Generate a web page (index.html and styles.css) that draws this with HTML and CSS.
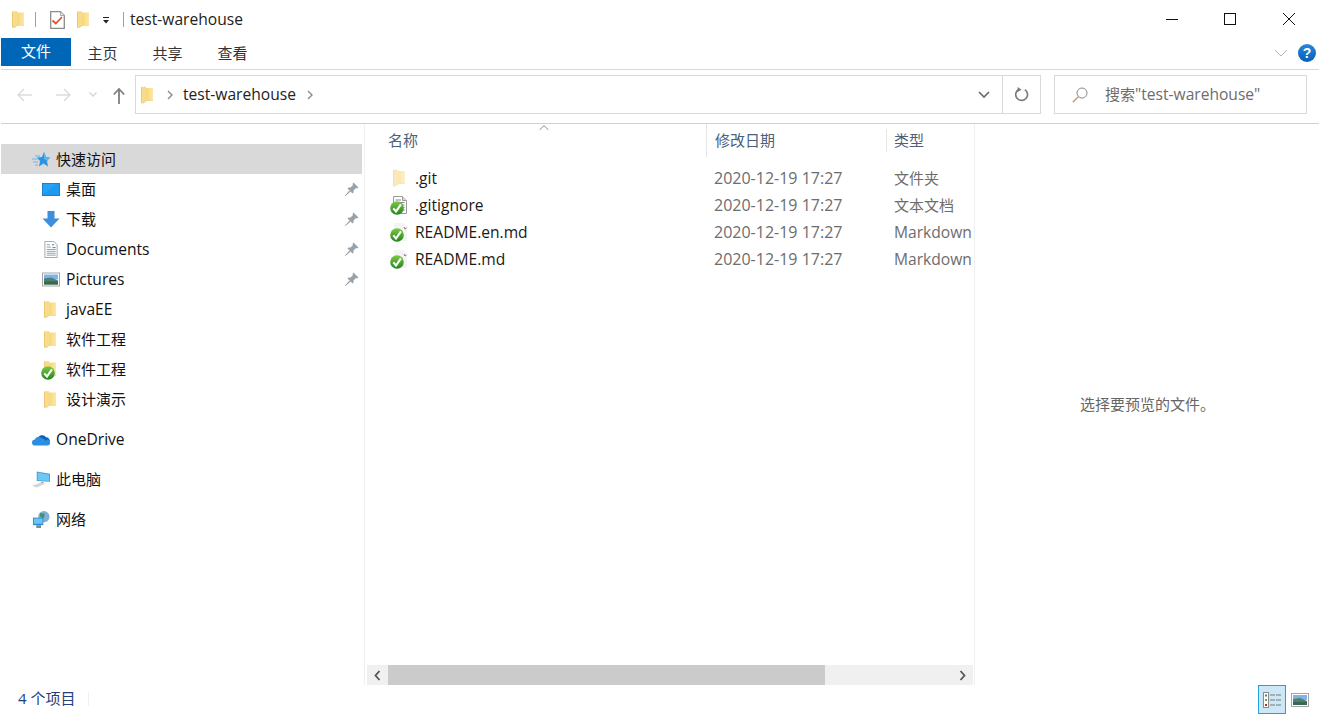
FILE: index.html
```html
<!DOCTYPE html>
<html lang="zh-CN">
<head>
  <meta charset="UTF-8">
  <title>test-warehouse</title>
  <link rel="stylesheet" href="styles.css">
</head>
<body>
  <svg class="defs" width="0" height="0">
    <defs>
      <linearGradient id="folder-right" x1="0" y1="0" x2="1" y2="0">
        <stop offset="0" stop-color="#f7d675"/>
        <stop offset="1" stop-color="#fce7a8"/>
      </linearGradient>
      <linearGradient id="check-fill" x1="0" y1="0" x2="0" y2="1">
        <stop offset="0" stop-color="#7ccb45"/>
        <stop offset="1" stop-color="#23831a"/>
      </linearGradient>
    </defs>
    <symbol id="folder" viewBox="0 0 12 17">
      <path d="M0 0.5 L5 0 L5 14 L1 17 L0 16.5 Z" fill="#f8dc8e"/>
      <path d="M0 0.5 L1 0.5 L1 16.5 L0 16.5 Z" fill="#efc96f"/>
      <path d="M5 1.5 L12 1.5 L12 14 L5 14 Z" fill="url(#folder-right)"/>
      <path d="M1 17 L5 14 L12 14 L12 14.6 L5.5 14.6 L2 17 Z" fill="#e8bd5e"/>
    </symbol>
    <symbol id="pin" viewBox="0 0 14 14">
      <path d="M8.5 0.5 L13.5 5.5 L12 6.5 L11 6 L8.5 8.5 L8.5 10.5 L7.5 11.5 L2.5 6.5 L3.5 5.5 L5.5 5.5 L8 3 L7.5 2 Z" fill="#98a2ab"/>
      <path d="M4.5 9 L0.5 13.5 L5 9.5 Z" fill="#98a2ab" stroke="#98a2ab"/>
    </symbol>
    <symbol id="check" viewBox="0 0 16 16">
      <circle cx="8" cy="8" r="7.8" fill="url(#check-fill)"/>
      <path d="M3.8 8.5 L6.8 12 L12.5 3.8" fill="none" stroke="#fff" stroke-width="2.4"/>
    </symbol>
    <symbol id="landscape" viewBox="0 0 18 14">
      <rect x="0.5" y="0.5" width="17" height="13" fill="#fff" stroke="#a5a5a5"/>
      <rect x="2" y="2" width="14" height="5" fill="#7db5ea"/>
      <path d="M2 6 L9 5 L16 8 L16 12 L2 12 Z" fill="#4f7f6f"/>
      <path d="M2 9 L16 9 L16 12 L2 12 Z" fill="#3b6650"/>
    </symbol>
  </svg>

  <header class="titlebar">
    <svg class="qa-folder"><use href="#folder"/></svg>
    <span class="qa-sep"></span>
    <svg class="qa-props" viewBox="0 0 15 18">
      <path d="M0.7 0.7 L10.5 0.7 L14.3 4.5 L14.3 17.3 L0.7 17.3 Z" fill="#fff" stroke="#8c8c8c" stroke-width="1.3"/>
      <path d="M10.5 0.7 L10.5 4.5 L14.3 4.5" fill="#e8e8e8" stroke="#a8a8a8"/>
      <path d="M2.5 9.5 L5.8 12.5 L12 6" fill="none" stroke="#e8501f" stroke-width="1.7"/>
    </svg>
    <svg class="qa-folder second"><use href="#folder"/></svg>
    <svg class="qa-more" viewBox="0 0 8 7">
      <rect x="1" y="0" width="6" height="1" fill="#222"/>
      <path d="M1 3 L7 3 L4 6.5 Z" fill="#222"/>
    </svg>
    <span class="qa-sep second"></span>
    <span class="window-title">test-warehouse</span>
    <div class="window-btns">
      <svg class="win-btn" viewBox="0 0 12 12"><rect x="0" y="6" width="12" height="1" fill="#111"/></svg>
      <svg class="win-btn" viewBox="0 0 12 12"><rect x="0.5" y="0.5" width="11" height="11" fill="none" stroke="#111"/></svg>
      <svg class="win-btn" viewBox="0 0 12 12"><path d="M0 0 L12 12 M12 0 L0 12" stroke="#111" fill="none"/></svg>
    </div>
  </header>

  <nav class="ribbon">
    <span class="tab tab-file">文件</span>
    <span class="tab">主页</span>
    <span class="tab">共享</span>
    <span class="tab">查看</span>
    <svg class="ribbon-chevron" viewBox="0 0 14 8"><path d="M1 1 L7 7 L13 1" fill="none" stroke="#b5b5b5"/></svg>
    <span class="help">?</span>
  </nav>

  <div class="addressbar">
    <svg class="nav-arrow first" viewBox="0 0 16 14"><path d="M15 7 L1 7 M7 1 L1 7 L7 13" fill="none" stroke="#dcdcdc" stroke-width="1.5"/></svg>
    <svg class="nav-arrow" viewBox="0 0 16 14"><path d="M1 7 L15 7 M9 1 L15 7 L9 13" fill="none" stroke="#dcdcdc" stroke-width="1.5"/></svg>
    <svg class="nav-down" viewBox="0 0 8 5"><path d="M0.5 0.5 L4 4 L7.5 0.5" fill="none" stroke="#d4d4d4" stroke-width="1.3"/></svg>
    <svg class="nav-up" viewBox="0 0 12 16"><path d="M6 16 L6 1 M0.8 6.5 L6 1 L11.2 6.5" fill="none" stroke="#7f7f7f" stroke-width="1.8"/></svg>
    <div class="path-box">
      <svg class="path-folder"><use href="#folder"/></svg>
      <svg class="crumb first-crumb" viewBox="0 0 6 10"><path d="M1 1 L5 5 L1 9" fill="none" stroke="#8a8a8a" stroke-width="1.4"/></svg>
      <span class="path-text">test-warehouse</span>
      <svg class="crumb" viewBox="0 0 6 10"><path d="M1 1 L5 5 L1 9" fill="none" stroke="#8a8a8a" stroke-width="1.4"/></svg>
      <svg class="path-drop" viewBox="0 0 12 7"><path d="M1 1 L6 6 L11 1" fill="none" stroke="#666" stroke-width="1.6"/></svg>
      <span class="refresh-cell">
        <svg class="refresh" viewBox="0 0 16 16"><path d="M5 2.6 A6.3 6.3 0 1 0 11.6 2.8" fill="none" stroke="#7a7a7a" stroke-width="1.8"/><path d="M4 0 L8 3 L3.5 5.5 Z" fill="#7a7a7a"/></svg>
      </span>
    </div>
    <div class="search-box">
      <svg class="search-icon" viewBox="0 0 16 16"><circle cx="10" cy="6" r="5" fill="none" stroke="#8a8a8a"/><path d="M6.3 9.7 L0.8 15.2" stroke="#c49a5c" stroke-width="1.3"/></svg>
      <span class="search-text">搜索<span class="lat">"test-warehouse"</span></span>
    </div>
  </div>

  <main class="content">
    <aside class="sidebar">
      <div class="nav-group">
        <div class="nav-row top selected">
          <svg class="nav-icon" viewBox="0 0 18 15">
            <path d="M12 0 L14 5 L18 5.5 L15 9 L16 14.5 L11.5 11.5 L7 14.5 L8 9 L5 5.5 L10 5 Z" fill="#2b95e4"/>
            <path d="M12 0 L14 5 L18 5.5 L15 9 L12 7 Z" fill="#5ab4f0"/>
            <path d="M3 4 L8 4 M0 7 L6 7 M1 10 L6 10 M3 13 L6 13" stroke="#6db5e8"/>
          </svg>
          <span>快速访问</span>
        </div>
        <div class="nav-row child">
          <svg class="nav-icon" viewBox="0 0 18 13"><rect x="0" y="0" width="18" height="13" fill="#1e7fcc"/><rect x="1" y="1" width="16" height="10.5" fill="#24a3f7"/><path d="M1 11.5 L14 1 L17 1 L17 11.5 Z" fill="#1c9af0"/></svg>
          <span>桌面</span>
          <svg class="pin"><use href="#pin"/></svg>
        </div>
        <div class="nav-row child">
          <svg class="nav-icon" viewBox="0 0 18 17"><path d="M5.5 0 L12.5 0 L12.5 7.5 L17.5 7.5 L9 16.5 L0.5 7.5 L5.5 7.5 Z" fill="#3b8fdc"/></svg>
          <span>下载</span>
          <svg class="pin"><use href="#pin"/></svg>
        </div>
        <div class="nav-row child">
          <svg class="nav-icon" viewBox="0 0 18 18"><path d="M2.5 0.5 L12 0.5 L15.5 4 L15.5 17.5 L2.5 17.5 Z" fill="#fff" stroke="#a5a5a5"/><path d="M4.5 4 L8 4 M4.5 6.5 L9 6.5 M4.5 9 L14 9 M4.5 11 L14 11 M4.5 13 L14 13 M4.5 15 L14 15" stroke="#8aa1b5"/><path d="M10 4 L12.5 4 M10.5 7 L14 7" stroke="#2f86d0"/></svg>
          <span class="lat">Documents</span>
          <svg class="pin"><use href="#pin"/></svg>
        </div>
        <div class="nav-row child">
          <svg class="nav-icon"><use href="#landscape"/></svg>
          <span class="lat">Pictures</span>
          <svg class="pin"><use href="#pin"/></svg>
        </div>
        <div class="nav-row child">
          <svg class="nav-icon folder-icon"><use href="#folder"/></svg>
          <span class="lat">javaEE</span>
        </div>
        <div class="nav-row child">
          <svg class="nav-icon folder-icon"><use href="#folder"/></svg>
          <span>软件工程</span>
        </div>
        <div class="nav-row child">
          <span class="icon-stack">
            <svg class="nav-icon folder-icon"><use href="#folder"/></svg>
            <svg class="badge"><use href="#check"/></svg>
          </span>
          <span>软件工程</span>
        </div>
        <div class="nav-row child">
          <svg class="nav-icon folder-icon"><use href="#folder"/></svg>
          <span>设计演示</span>
        </div>
      </div>
      <div class="nav-group">
        <div class="nav-row top">
          <svg class="nav-icon" viewBox="0 0 18 12">
            <path d="M6 6 A4.3 4.3 0 0 1 14 3.8 A3.5 3.5 0 0 1 17.6 8 L12 8 Z" fill="#0f5fb4"/>
            <path d="M3.2 12 A3 3 0 0 1 2.8 6 A4 4 0 0 1 10 5 A3.2 3.2 0 0 1 13.5 7.5 A2.4 2.4 0 0 1 18 9.5 A2.4 2.4 0 0 1 15.6 12 Z" fill="#2a8fe0"/>
          </svg>
          <span class="lat">OneDrive</span>
        </div>
      </div>
      <div class="nav-group">
        <div class="nav-row top">
          <svg class="nav-icon" viewBox="0 0 19 17">
            <path d="M5 0 L19 2.5 L19 11 L5 10 Z" fill="#4a9ed0"/>
            <path d="M6 1.2 L18 3.4 L18 10 L6 9.2 Z" fill="#6cc8f4"/>
            <path d="M0 15 L9 12 L14 13 L5 17 Z" fill="#d4d4d4"/>
            <path d="M11 11 L13 12.5 L9 12 Z" fill="#8a949c"/>
          </svg>
          <span>此电脑</span>
        </div>
      </div>
      <div class="nav-group">
        <div class="nav-row top">
          <svg class="nav-icon" viewBox="0 0 18 18">
            <circle cx="12" cy="6" r="6" fill="#7fb1d8"/>
            <path d="M8 2 L13 3 L12 8 L8 6 Z" fill="#4c8f70"/>
            <rect x="0.5" y="7" width="11" height="8" fill="#2f8fd6"/>
            <rect x="1.5" y="8" width="9" height="5.5" fill="#6bc5f2"/>
            <rect x="4" y="15" width="5" height="3" fill="#7d8a96"/>
          </svg>
          <span>网络</span>
        </div>
      </div>
    </aside>

    <section class="files">
      <svg class="sort-caret" viewBox="0 0 10 5"><path d="M0.5 5 L5 0.7 L9.5 5" fill="none" stroke="#8a8a8a"/></svg>
      <div class="list-head">
        <span class="col-name">名称</span>
        <span class="col-date">修改日期</span>
        <span class="col-type">类型</span>
      </div>
      <div class="list-body">
        <div class="file-row">
          <span class="col-name"><svg class="file-folder"><use href="#folder"/></svg>.git</span>
          <span class="col-date">2020-12-19 17:27</span>
          <span class="col-type">文件夹</span>
        </div>
        <div class="file-row">
          <span class="col-name">
            <span class="file-icon">
              <svg class="doc" viewBox="0 0 14 18"><path d="M0.5 0.5 L9.5 0.5 L13.5 4.5 L13.5 17.5 L0.5 17.5 Z" fill="#fff" stroke="#9a9a9a"/><path d="M9.5 0.5 L9.5 4.5 L13.5 4.5" fill="#ddd" stroke="#9a9a9a"/><path d="M2.5 4 L8 4 M2.5 6.5 L11.5 6.5 M2.5 9 L11.5 9 M2.5 11.5 L11.5 11.5 M2.5 14 L11.5 14" stroke="#8a8a8a"/></svg>
              <svg class="file-badge"><use href="#check"/></svg>
            </span>.gitignore
          </span>
          <span class="col-date">2020-12-19 17:27</span>
          <span class="col-type">文本文档</span>
        </div>
        <div class="file-row">
          <span class="col-name">
            <span class="file-icon">
              <svg class="doc" viewBox="0 0 14 18"><path d="M1 0 L10 0 L14 4 L14 18 L1 18 Z" fill="#f4f4f4"/><path d="M11 4 L12 6 L13.5 5" stroke="#777" fill="none"/></svg>
              <svg class="file-badge"><use href="#check"/></svg>
            </span>README.en.md
          </span>
          <span class="col-date">2020-12-19 17:27</span>
          <span class="col-type lat">Markdown</span>
        </div>
        <div class="file-row">
          <span class="col-name">
            <span class="file-icon">
              <svg class="doc" viewBox="0 0 14 18"><path d="M1 0 L10 0 L14 4 L14 18 L1 18 Z" fill="#f4f4f4"/><path d="M11 4 L12 6 L13.5 5" stroke="#777" fill="none"/></svg>
              <svg class="file-badge"><use href="#check"/></svg>
            </span>README.md
          </span>
          <span class="col-date">2020-12-19 17:27</span>
          <span class="col-type lat">Markdown</span>
        </div>
      </div>
      <div class="hscroll">
        <span class="scroll-btn"><svg viewBox="0 0 7 11"><path d="M5.5 1 L1.5 5.5 L5.5 10" fill="none" stroke="#555" stroke-width="1.8"/></svg></span>
        <span class="scroll-thumb"></span>
        <span class="scroll-btn right"><svg viewBox="0 0 7 11"><path d="M1.5 1 L5.5 5.5 L1.5 10" fill="none" stroke="#555" stroke-width="1.8"/></svg></span>
      </div>
    </section>

    <section class="preview">选择要预览的文件。</section>
  </main>

  <footer class="statusbar">
    <span class="status-text">4 个项目</span>
    <span class="status-sep"></span>
    <span class="view-btn active">
      <svg viewBox="0 0 18 16">
        <rect x="0.5" y="0.5" width="5" height="15" fill="#fff" stroke="#8a8a8a"/>
        <rect x="2" y="2.5" width="2" height="2" fill="#3a8a8a"/><rect x="2" y="7" width="2" height="2" fill="#8a9a3a"/><rect x="2" y="12" width="2" height="2" fill="#c0301c"/>
        <path d="M7 3 L12 3 M13 3 L18 3 M7 8 L12 8 M13 8 L18 8 M7 13 L12 13 M13 13 L18 13" stroke="#777"/>
      </svg>
    </span>
    <span class="view-btn">
      <svg viewBox="0 0 18 14"><use href="#landscape"/></svg>
    </span>
  </footer>
</body>
</html>
```

FILE: styles.css
```css
* {
  box-sizing: border-box;
}

html, body {
  margin: 0;
  padding: 0;
  height: 715px;
  overflow: hidden;
}

body {
  display: flex;
  flex-direction: column;
  background: #fff;
  color: #1a1a1a;
  font-family: "Open Sans", "Noto Sans CJK SC", sans-serif;
  font-size: 15px;
}

.defs {
  position: absolute;
}

/* latin text runs a bit wider than the cjk next to it */
.lat {
  font-size: 15.6px;
}

/* title bar */
.titlebar {
  display: flex;
  align-items: center;
  height: 38px;
  flex: none;
}

.qa-folder {
  width: 12px;
  height: 17px;
  margin-left: 12px;
}

.qa-folder.second {
  margin-left: 12px;
}

.qa-sep {
  width: 1px;
  height: 15px;
  background: #a0a0a0;
  margin-left: 11px;
}

.qa-sep.second {
  margin-left: 13px;
}

.qa-props {
  width: 15px;
  height: 18px;
  margin-left: 14px;
  margin-top: 2px;
}

.qa-more {
  width: 8px;
  height: 7px;
  margin-left: 13px;
  margin-top: 2px;
}

.window-title {
  margin-left: 6px;
  font-size: 15.6px;
  color: #222;
}

.window-btns {
  display: flex;
  margin-left: auto;
  gap: 47px;
  padding-right: 25px;
}

.win-btn {
  width: 12px;
  height: 12px;
}

.win-btn:first-child {
  margin-right: -1px;
}

/* ribbon tabs */
.ribbon {
  display: flex;
  align-items: flex-start;
  height: 32px;
  flex: none;
  margin: 0 1px;
  border-bottom: 1px solid #d9d9d9;
}

.tab {
  width: 65px;
  height: 28px;
  text-align: center;
  font-size: 15px;
  line-height: 30px;
  color: #333;
}

.tab-file {
  width: 70px;
  margin-right: -1px;
  line-height: 27px;
  background: #0067b8;
  color: #fff;
}

.ribbon-chevron {
  width: 14px;
  height: 8px;
  margin-left: auto;
  margin-top: 11px;
}

.help {
  width: 18px;
  height: 18px;
  margin: 6px 3px 0 10px;
  border-radius: 50%;
  background: linear-gradient(#2a86dc, #0560b8);
  color: #fff;
  font-family: "Liberation Sans", sans-serif;
  font-size: 14px;
  font-weight: bold;
  line-height: 18px;
  text-align: center;
}

/* address row */
.addressbar {
  display: flex;
  align-items: center;
  height: 54px;
  flex: none;
  margin: 0 1px;
  padding: 0 12px 4px 0;
  border-bottom: 1px solid #d0d0d0;
}

.nav-arrow {
  width: 16px;
  height: 14px;
  margin-left: 22px;
}

.nav-arrow.first {
  margin-left: 16px;
}

.nav-down {
  width: 8px;
  height: 5px;
  margin-left: 18px;
}

.nav-up {
  width: 12px;
  height: 16px;
  margin-left: 16px;
  margin-top: 3px;
}

.path-box {
  display: flex;
  align-items: center;
  width: 906px;
  height: 39px;
  margin-left: 10px;
  border: 1px solid #d9d9d9;
}

.path-folder {
  width: 12px;
  height: 18px;
  margin-left: 5px;
}

.crumb {
  width: 6px;
  height: 10px;
  margin-left: 11px;
}

.crumb.first-crumb {
  margin-left: 14px;
  margin-right: 10px;
}

.path-text {
  margin-top: -2px;
  font-size: 15.6px;
  color: #222;
}

.path-drop {
  width: 12px;
  height: 7px;
  margin-left: auto;
  margin-right: 12px;
}

.refresh-cell {
  display: flex;
  align-items: center;
  justify-content: center;
  width: 38px;
  height: 37px;
  border-left: 1px solid #d9d9d9;
}

.refresh {
  width: 15px;
  height: 15px;
}

.search-box {
  display: flex;
  align-items: center;
  width: 253px;
  height: 39px;
  margin-left: 13px;
  border: 1px solid #d9d9d9;
}

.search-icon {
  width: 16px;
  height: 16px;
  margin-left: 17px;
}

.search-text {
  margin-left: 17px;
  margin-top: -2px;
  color: #6d6d6d;
}

/* main area */
.content {
  display: flex;
  flex: 1;
  min-height: 0;
}

.sidebar {
  width: 365px;
  flex: none;
  padding: 20px 2px 0 1px;
  border-right: 1px solid #f0f0f0;
}

.nav-group {
  margin-bottom: 10px;
}

.nav-row {
  display: flex;
  align-items: center;
  height: 30px;
  color: #111;
}

.nav-row > span:not(.lat):not(.icon-stack) {
  margin-top: -2px;
}

.nav-row.top {
  padding-left: 31px;
}

.nav-row.child {
  padding-left: 41px;
}

.nav-row.selected {
  background: #d9d9d9;
}

.nav-icon {
  width: 18px;
  height: 17px;
  margin-right: 6px;
  flex: none;
}

.folder-icon {
  width: 12px;
  height: 17px;
  margin-left: 2px;
  margin-right: 10px;
}

.icon-stack {
  position: relative;
  display: flex;
}

.badge {
  position: absolute;
  left: -1px;
  top: 5px;
  width: 14px;
  height: 14px;
}

.pin {
  width: 14px;
  height: 14px;
  margin-left: auto;
  margin-right: 3px;
}

/* file list */
.files {
  position: relative;
  display: flex;
  flex-direction: column;
  width: 610px;
  flex: none;
  border-right: 1px solid #f0f0f0;
}

.sort-caret {
  position: absolute;
  left: 174px;
  top: 1px;
  width: 10px;
  height: 5px;
}

.list-head, .file-row {
  display: flex;
  align-items: center;
  white-space: nowrap;
}

.list-head {
  height: 33px;
  color: #4c607a;
}

.list-head span {
  padding-bottom: 2px;
}

.col-name {
  display: flex;
  align-items: center;
  width: 341px;
  flex: none;
  padding-left: 23px;
  height: 100%;
}

.col-date {
  width: 180px;
  flex: none;
  padding-left: 8px;
  height: 100%;
  display: flex;
  align-items: center;
}

.col-type {
  width: 88px;
  flex: none;
  padding-left: 7px;
  overflow: hidden;
}

.list-head .col-date, .list-head .col-type {
  border-left: 1px solid #e5e5e5;
}

.list-body {
  flex: 1;
  padding-top: 7px;
}

.file-row {
  height: 27px;
  color: #6d6d6d;
}

.file-row .col-name {
  color: #1a1a1a;
  font-size: 15.6px;
}

.file-row .col-date {
  font-size: 16px;
}

.file-row .col-type {
  padding-left: 8px;
}

.file-folder {
  width: 12px;
  height: 18px;
  margin: 0 10px 0 5px;
  opacity: 0.6;
}

.file-icon {
  position: relative;
  display: block;
  width: 18px;
  height: 18px;
  margin: 0 8px 0 1px;
}

.doc {
  position: absolute;
  left: 4px;
  top: 0;
  width: 14px;
  height: 18px;
}

.file-badge {
  position: absolute;
  left: 1px;
  top: 5px;
  width: 14px;
  height: 14px;
}

.hscroll {
  display: flex;
  height: 20px;
  margin: 0 1px 0 2px;
  background: #f0f0f0;
}

.scroll-btn {
  display: flex;
  align-items: center;
  justify-content: center;
  width: 21px;
  flex: none;
}

.scroll-btn svg {
  width: 7px;
  height: 11px;
}

.scroll-btn.right {
  margin-left: auto;
}

.scroll-thumb {
  width: 437px;
  background: #cbcbcb;
}

.preview {
  flex: 1;
  display: flex;
  align-items: center;
  justify-content: center;
  padding-bottom: 3px;
  color: #666;
}

/* status bar */
.statusbar {
  display: flex;
  align-items: center;
  height: 30px;
  flex: none;
  padding-right: 11px;
}

.status-text {
  margin-left: 18px;
  margin-bottom: 6px;
  color: #24407a;
}

.status-sep {
  width: 1px;
  height: 14px;
  margin-left: 13px;
  margin-right: auto;
  margin-bottom: 2px;
  background: #f0f0f0;
}

.view-btn {
  display: flex;
  align-items: center;
  justify-content: center;
  width: 18px;
  height: 29px;
  margin-bottom: 1px;
}

.view-btn svg {
  width: 18px;
  height: 16px;
}

.view-btn.active {
  width: 28px;
  margin-right: 5px;
  background: #cce8f7;
  border: 1px solid #26a0da;
}
```
